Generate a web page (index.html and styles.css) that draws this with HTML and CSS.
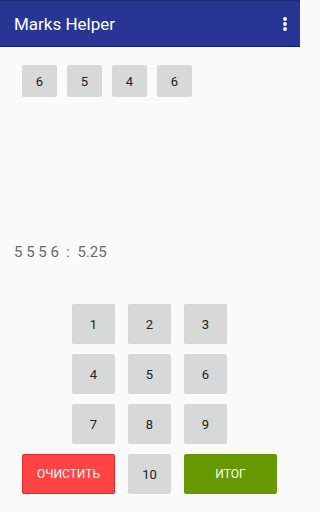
FILE: index.html
```html
<!DOCTYPE html>
<html>
<head>
<meta charset="utf-8">
<link rel="stylesheet" href="styles.css">
</head>
<body>
<div class="app">
  <header class="bar">
    <span class="title">Marks Helper</span>
    <svg class="menu" width="6" height="16" viewBox="0 0 6 16"><circle cx="3" cy="3" r="1.9" fill="#fff"/><circle cx="3" cy="8" r="1.9" fill="#fff"/><circle cx="3" cy="13" r="1.9" fill="#fff"/></svg>
  </header>
  <div class="marks">
    <div class="chip">6</div>
    <div class="chip">5</div>
    <div class="chip">4</div>
    <div class="chip">6</div>
  </div>
  <div class="result">5 5 5 6&nbsp;&nbsp;:&nbsp;&nbsp;5.25</div>
  <div class="pad">
    <div class="key k1">1</div>
    <div class="key">2</div>
    <div class="key">3</div>
    <div class="key k1">4</div>
    <div class="key">5</div>
    <div class="key">6</div>
    <div class="key k1">7</div>
    <div class="key">8</div>
    <div class="key">9</div>
    <div class="key clear">ОЧИСТИТЬ</div>
    <div class="key">10</div>
    <div class="key total">ИТОГ</div>
  </div>
</div>
</body>
</html>
```

FILE: styles.css
```css
html, body {
  margin: 0;
  padding: 0;
  background: #fafafa;
  font-family: Roboto, "Noto Sans", sans-serif;
}
.app {
  width: 300px;
  height: 512px;
  display: flex;
  flex-direction: column;
}
.bar {
  background: #283593;
  border-top: 1px solid #1f2a7a;
  border-bottom: 1px solid #101c8a;
  box-sizing: border-box;
  height: 47px;
  display: flex;
  align-items: center;
  justify-content: space-between;
  padding: 0 14px 0 14px;
}
.title {
  color: #fff;
  font-size: 17px;
  margin-top: 1px;
}
.menu {
  display: block;
  margin-right: -2px;
  margin-top: 1px;
}
.marks {
  display: flex;
  gap: 10px;
  padding: 18px 0 0 22px;
}
.chip {
  width: 35px;
  height: 32px;
  background: #d7d8d8;
  border-radius: 2px;
  display: flex;
  align-items: center;
  justify-content: center;
  font-size: 13px;
  color: #222;
}
.result {
  margin-top: 145px;
  padding-left: 14px;
  font-size: 15px;
  color: #6a6a6a;
  line-height: 20px;
}
.pad {
  margin-top: 42px;
  margin-left: 22px;
  display: grid;
  grid-template-columns: 37px 43px 43px 43px 37px;
  grid-auto-rows: 40px;
  column-gap: 13px;
  row-gap: 10px;
}
.key {
  background: #d7d8d8;
  border-radius: 2px;
  display: flex;
  align-items: center;
  justify-content: center;
  font-size: 13px;
  color: #222;
}
.k1 {
  grid-column: 2;
}
.clear {
  grid-column: 1 / span 2;
  background: #ff4444;
  border: 1px solid #e8262a;
  box-sizing: border-box;
  color: #fff;
  font-size: 12px;
}
.total {
  grid-column: 4 / span 2;
  background: #669900;
  color: #fff;
  font-size: 12px;
}
```
